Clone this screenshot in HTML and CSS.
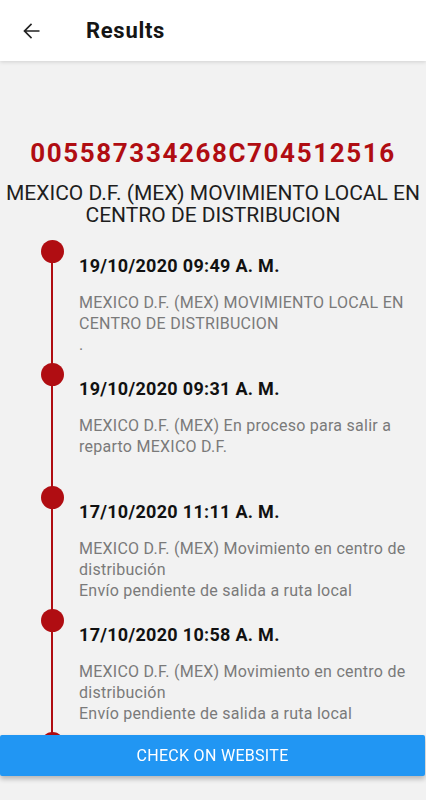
FILE: index.html
```html
<!DOCTYPE html>
<html lang="es">
<head>
<meta charset="utf-8">
<title>Results</title>
<link rel="stylesheet" href="styles.css">
</head>
<body>
<header class="appbar">
  <button class="back" aria-label="Back">
    <svg width="24" height="24" viewBox="0 0 24 24"><path d="M20.5 11.15H7.4l5.7-5.7-1.1-1.1L4.3 12l7.7 7.65 1.1-1.1-5.7-5.7h13.1z" fill="#222"/></svg>
  </button>
  <h1 class="title">Results</h1>
</header>
<main class="content">
  <section class="summary">
    <div class="tracking">005587334268C704512516</div>
    <div class="status">MEXICO D.F. (MEX) MOVIMIENTO LOCAL EN CENTRO DE DISTRIBUCION</div>
  </section>
  <ol class="timeline">
    <li class="event">
      <div class="rail"><span class="dot"></span></div>
      <div class="body">
        <div class="date">19/10/2020 09:49 A. M.</div>
        <p class="desc">MEXICO D.F. (MEX) MOVIMIENTO LOCAL EN CENTRO DE DISTRIBUCION<br>.</p>
      </div>
    </li>
    <li class="event">
      <div class="rail"><span class="dot"></span></div>
      <div class="body">
        <div class="date">19/10/2020 09:31 A. M.</div>
        <p class="desc">MEXICO D.F. (MEX) En proceso para salir a reparto MEXICO D.F.</p>
      </div>
    </li>
    <li class="event">
      <div class="rail"><span class="dot"></span></div>
      <div class="body">
        <div class="date">17/10/2020 11:11 A. M.</div>
        <p class="desc">MEXICO D.F. (MEX) Movimiento en centro de distribución<br>Envío pendiente de salida a ruta local</p>
      </div>
    </li>
    <li class="event">
      <div class="rail"><span class="dot"></span></div>
      <div class="body">
        <div class="date">17/10/2020 10:58 A. M.</div>
        <p class="desc">MEXICO D.F. (MEX) Movimiento en centro de distribución<br>Envío pendiente de salida a ruta local</p>
      </div>
    </li>
    <li class="event">
      <div class="rail"><span class="dot"></span></div>
    </li>
  </ol>
</main>
<button class="cta">CHECK ON WEBSITE</button>
</body>
</html>
```
FILE: styles.css
```css
* { box-sizing: border-box; }
html, body {
  margin: 0;
  padding: 0;
  height: 800px;
  overflow: hidden;
}
body {
  background: #f2f2f2;
  font-family: Roboto, "Liberation Sans", Arial, sans-serif;
  color: #1a1a1a;
}
.appbar {
  position: relative;
  z-index: 2;
  height: 61px;
  background: #ffffff;
  box-shadow: 0 1px 4px rgba(0,0,0,0.14);
  display: flex;
  align-items: center;
  padding-left: 19px;
}
.back {
  width: 24px;
  height: 24px;
  padding: 0;
  border: 0;
  background: none;
  display: flex;
  align-items: center;
  justify-content: center;
}
.title {
  margin: 0 0 0 43px;
  font-size: 22px;
  font-weight: 700;
  color: #151515;
  letter-spacing: 0.7px;
}
.content {
  height: 715px;
  overflow: hidden;
  padding-top: 76px;
}
.summary {
  text-align: center;
}
.tracking {
  font-size: 26px;
  line-height: 32px;
  font-weight: 700;
  color: #b00d12;
  letter-spacing: 1.6px;
}
.status {
  margin-top: 13px;
  font-size: 21px;
  line-height: 22px;
  color: #1e1e1e;
}
.timeline {
  list-style: none;
  margin: 14px 0 0;
  padding: 0;
}
.event {
  display: flex;
  height: 123px;
}
.rail {
  position: relative;
  flex: 0 0 79px;
  padding-left: 41px;
}
.rail::before {
  content: "";
  position: absolute;
  left: 51px;
  top: 11px;
  width: 2px;
  height: 123px;
  background: #b00d12;
}
.dot {
  position: relative;
  display: block;
  width: 23px;
  height: 23px;
  border-radius: 50%;
  background: #b00d12;
}
.body {
  flex: 1;
  padding-top: 14px;
  padding-right: 4px;
}
.date {
  font-size: 18px;
  line-height: 24px;
  font-weight: 700;
  color: #111;
  letter-spacing: 0.3px;
}
.desc {
  margin: 14px 0 0;
  font-size: 16px;
  line-height: 21px;
  color: #7a7a7a;
  letter-spacing: 0.25px;
}
.cta {
  position: fixed;
  left: 0;
  right: 1px;
  bottom: 24px;
  height: 41px;
  border: 0;
  border-radius: 2px;
  background: #2196f3;
  color: #ffffff;
  font-family: Roboto, "Liberation Sans", Arial, sans-serif;
  font-size: 16px;
  letter-spacing: 0.3px;
  box-shadow: 0 3px 5px rgba(0,0,0,0.25);
  z-index: 3;
}
```
